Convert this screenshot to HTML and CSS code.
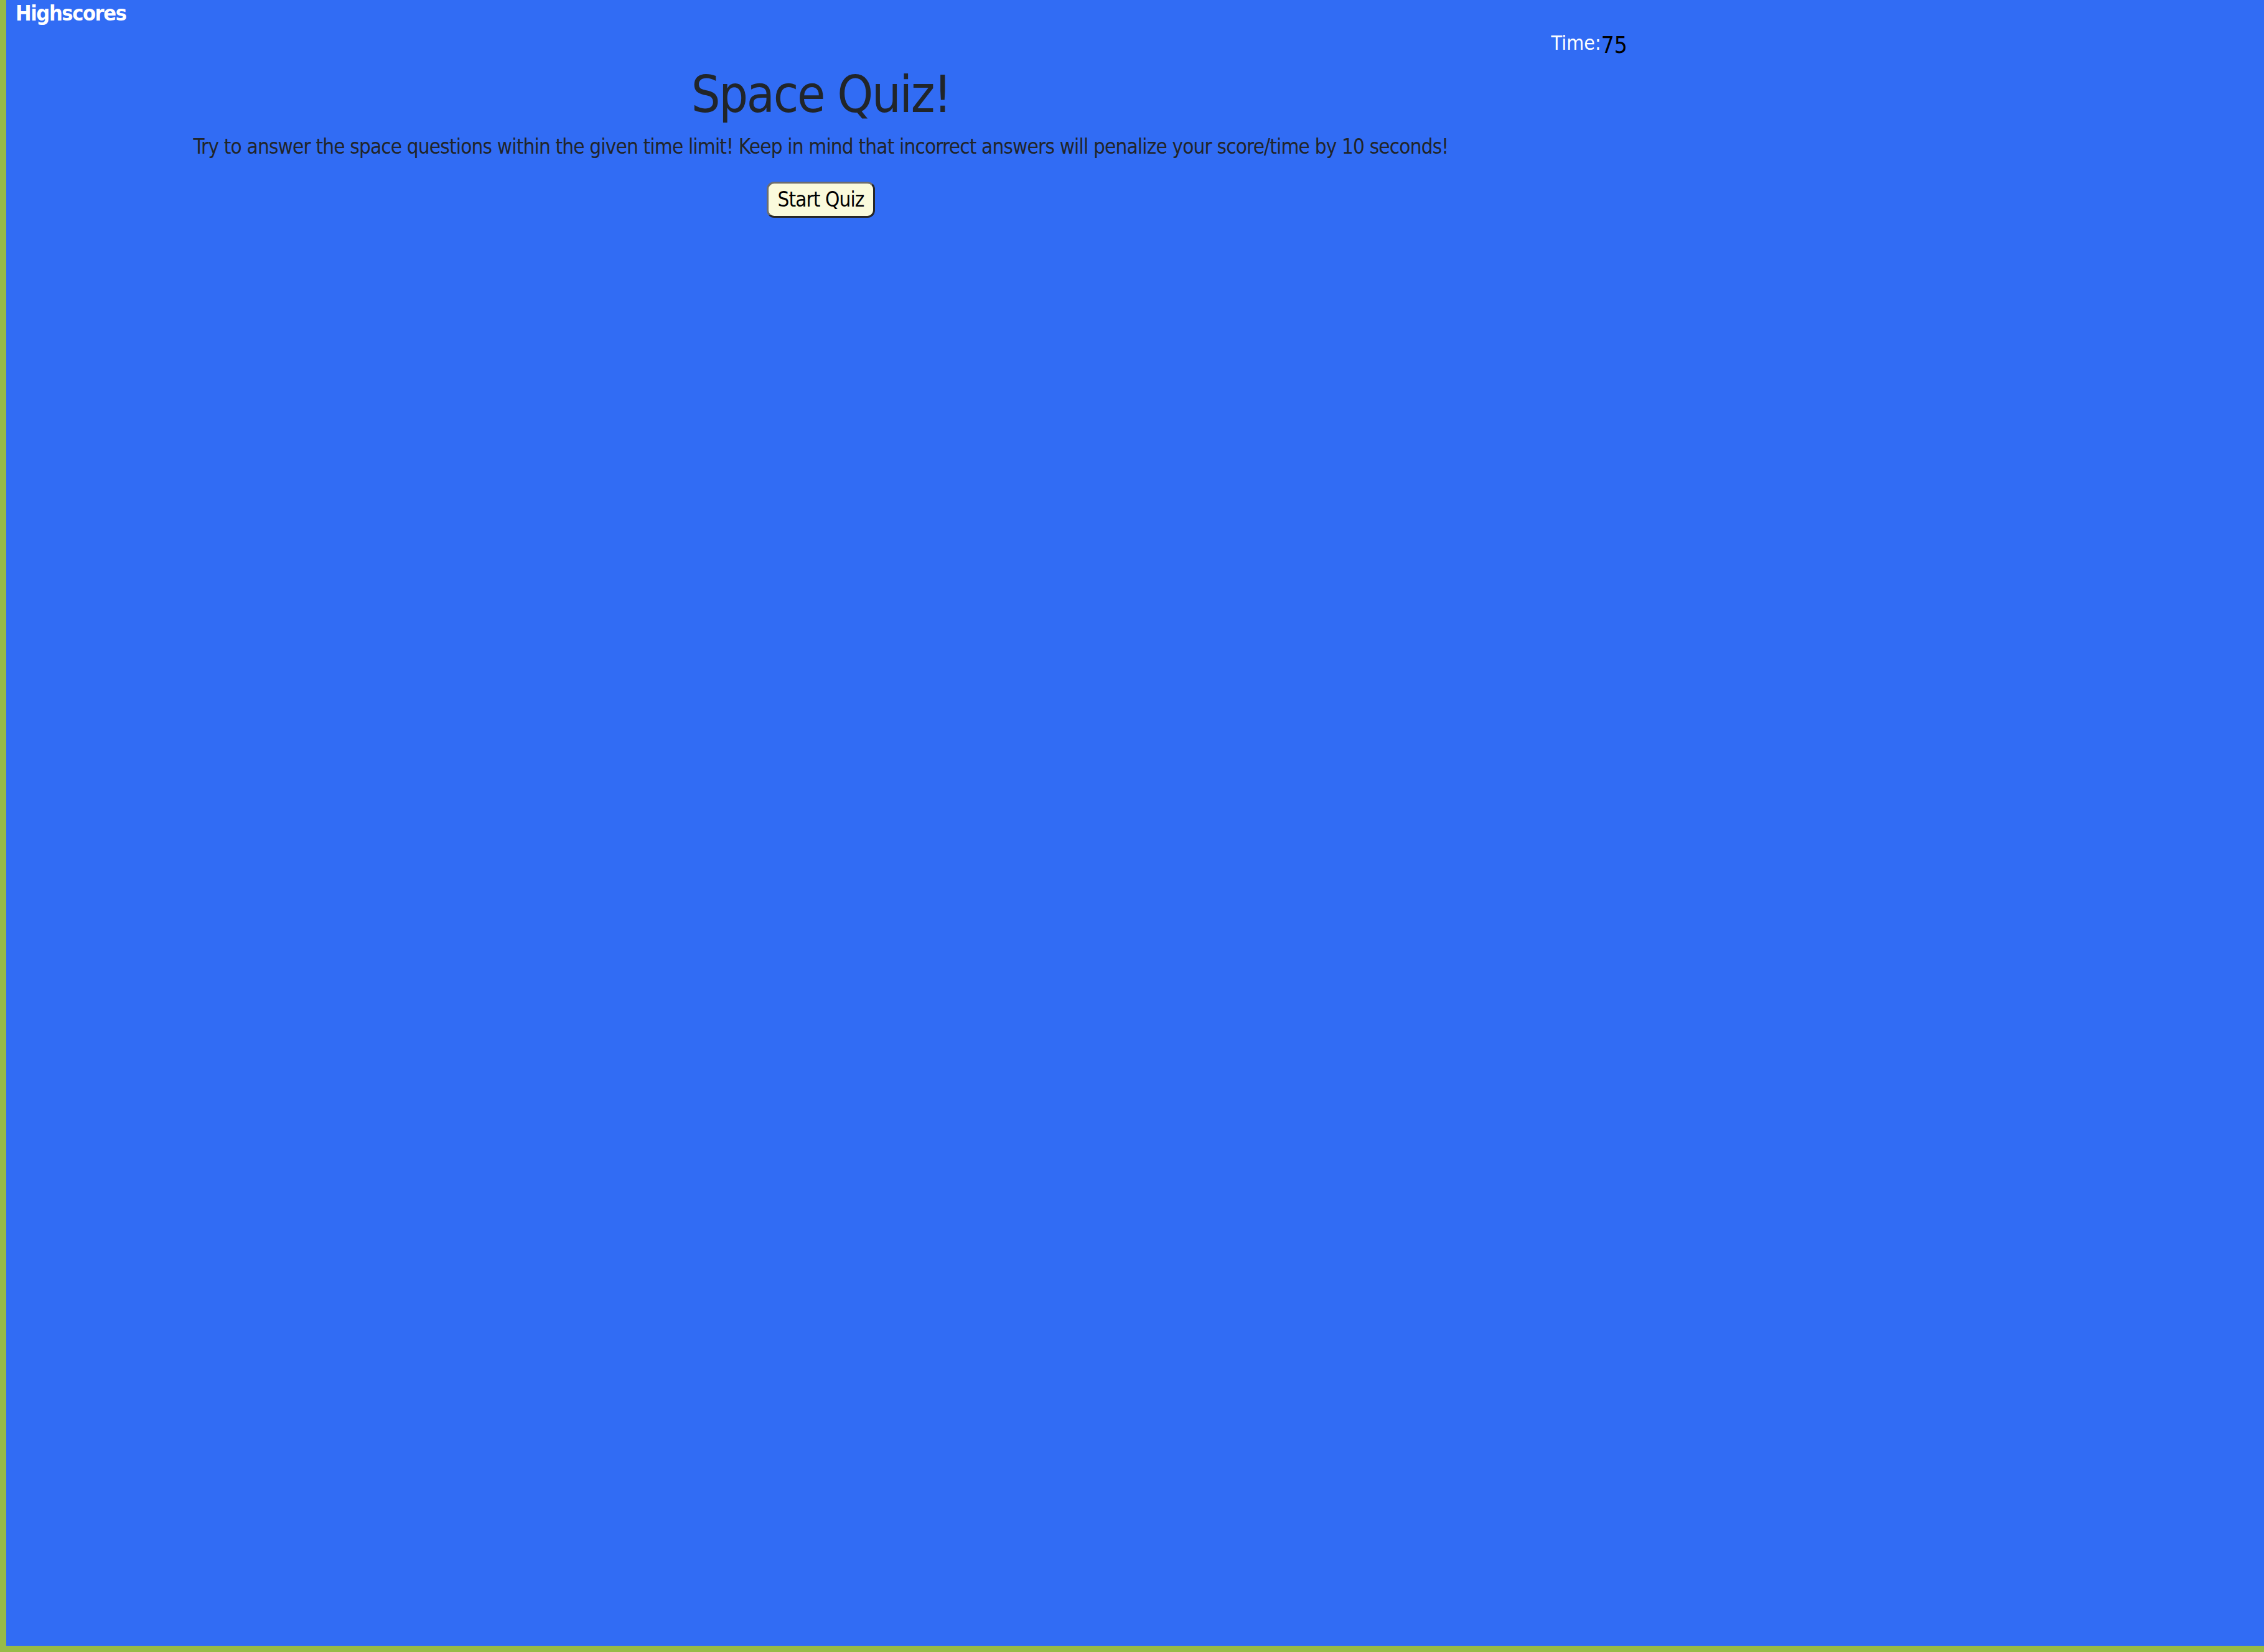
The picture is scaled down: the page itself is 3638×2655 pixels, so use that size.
FILE: index.html
```html
<!DOCTYPE html>
<html lang="en">
<head>
<meta charset="utf-8">
<title>Space Quiz</title>
<link rel="stylesheet" href="styles.css">
</head>
<body>
<div class="page">
  <div class="container">
    <nav class="nav"><a class="highscores" href="#">Highscores</a></nav>
    <div class="timer"><span class="timer-label">Time:</span><span class="timer-value">75</span></div>
    <main class="intro">
      <h1 class="title">Space Quiz!</h1>
      <p class="lead">Try to answer the space questions within the given time limit! Keep in mind that incorrect answers will penalize your score/time by 10 seconds!</p>
      <button class="start" type="button">Start Quiz</button>
    </main>
  </div>
</div>
</body>
</html>
```
FILE: styles.css
```css
html, body {
  margin: 0;
  padding: 0;
  height: 100%;
}
body {
  background: #96bb47;
  font-family: "DejaVu Sans Condensed", "DejaVu Sans", sans-serif;
  color: #212529;
}
.page {
  margin-left: 10px;
  height: calc(100% - 10px);
  background: #316cf4;
  overflow: hidden;
}
.container {
  width: 2618px;
}
.nav {
  height: 40px;
  padding-left: 15px;
}
.highscores {
  display: inline-block;
  margin-top: 1px;
  font-size: 34px;
  line-height: 40px;
  font-weight: bold;
  letter-spacing: -0.04em;
  color: #ffffff;
  text-decoration: none;
}
.timer {
  display: flex;
  justify-content: flex-end;
  align-items: flex-start;
  margin-top: 11px;
  padding-right: 13px;
}
.timer-label {
  font-size: 32px;
  line-height: 1.164;
  color: #ffffff;
}
.timer-value {
  font-size: 37px;
  line-height: 1.164;
  color: #000000;
}
.intro {
  display: flex;
  flex-direction: column;
  align-items: center;
  text-align: center;
}
.title {
  margin: 10px 0 0;
  font-size: 82px;
  line-height: 1.164;
  font-weight: normal;
  letter-spacing: -0.028em;
}
.lead {
  margin: 17px 0 0;
  font-size: 33px;
  line-height: 1.164;
  letter-spacing: -0.025em;
}
.start {
  margin-top: 37px;
  padding: 7px 14px;
  font-family: inherit;
  font-size: 33px;
  line-height: 1.164;
  letter-spacing: -0.027em;
  color: #000000;
  background: #fafadc;
  border: 3px solid;
  border-color: #6e6e6e #262626 #262626 #6e6e6e;
  border-radius: 12px;
}
```
